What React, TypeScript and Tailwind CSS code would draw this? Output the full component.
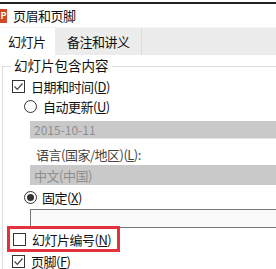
import React from "react";

const font = { fontFamily: '"Noto Sans CJK SC", "Noto Sans", sans-serif' };

function Check({ checked }: { checked: boolean }) {
  return (
    <div className="w-[13px] h-[13px] border border-[#333] bg-white flex items-center justify-center shrink-0">
      {checked && (
        <svg width="11" height="11" viewBox="0 0 11 11">
          <path d="M1.5 5.5 L4.3 8.3 L9.5 2.5" fill="none" stroke="#444" strokeWidth="1.2" />
        </svg>
      )}
    </div>
  );
}

function Radio({ checked }: { checked: boolean }) {
  return (
    <div className="w-[13px] h-[13px] rounded-full border border-[#333] bg-white flex items-center justify-center shrink-0">
      {checked && <div className="w-[7px] h-[7px] rounded-full bg-[#333]" />}
    </div>
  );
}

function Mn({ text, k }: { text: string; k: string }) {
  return (
    <span className="whitespace-nowrap">
      {text}(<span className="underline">{k}</span>)
    </span>
  );
}

export default function App() {
  return (
    <div className="w-[276px] h-[269px] bg-white overflow-hidden text-[13px] tracking-[-0.5px] leading-none text-[#111]" style={font}>
      <div className="h-[2px] bg-white" />
      <div className="h-[2px] bg-[#222]" />
      {/* title bar */}
      <div className="h-[23px] flex items-center">
        <div className="w-[7px] h-[14px] bg-[#d24726] flex items-center justify-end pr-[1px]">
          <span className="text-white text-[9px] font-bold leading-none">P</span>
        </div>
        <span className="ml-[6px]">页眉和页脚</span>
      </div>
      {/* tabs */}
      <div className="h-[28px] flex bg-[#ececec] border-t border-[#f4f4f4]">
        <div className="w-[55px] bg-white flex items-center pl-[8px]">幻灯片</div>
        <div className="w-[85px] ml-[2px] flex items-center pl-[10px] border-r border-[#dcdcdc]">备注和讲义</div>
        <div className="flex-1" />
      </div>
      {/* content */}
      <div className="relative h-[214px] pt-[11px]">
        <div className="ml-[2px] h-full border-l border-t border-[#dcdcdc] relative">
          <div className="absolute left-[8px] -top-[8px] bg-white px-[3px] text-[13.5px] tracking-normal leading-none">幻灯片包含内容</div>
          <div className="pt-[12px] flex flex-col">
            <div className="h-[14px] flex items-center gap-[6px] pl-[9px]">
              <Check checked />
              <Mn text="日期和时间" k="D" />
            </div>
            <div className="h-[20px] mt-[3px] flex items-center gap-[6px] pl-[21px]">
              <Radio checked={false} />
              <Mn text="自动更新" k="U" />
            </div>
            <div className="mt-[5px] ml-[27px] h-[18px] bg-[#c9c9c9] border-b border-[#e4e4e4] flex items-center pl-[4px] text-[12px] tracking-normal text-[#8e8e8e]">
              2015-10-11
            </div>
            <div className="h-[18px] mt-[6px] flex items-center pl-[33px] text-[#444] whitespace-nowrap">
              语言(国家/地区)(<span className="underline">L</span>):
            </div>
            <div className="mt-[2px] ml-[27px] h-[20px] bg-[#c9c9c9] flex items-center pl-[4px] text-[#8e8e8e]">
              中文(中国)
            </div>
            <div className="h-[24px] flex items-center gap-[5px] pl-[21px]">
              <Radio checked />
              <Mn text="固定" k="X" />
            </div>
            <div className="ml-[27px] h-[19px] border border-[#777] border-r-0 bg-[#fafafa]" />
            <div className="relative z-10 -mt-[2px] ml-[4px] w-[113px] h-[26px] border-[3px] border-[#e3323e] flex items-center gap-[6px] pl-[3px]">
              <Check checked={false} />
              <Mn text="幻灯片编号" k="N" />
            </div>
            <div className="h-[16px] mt-[1px] flex items-center gap-[6px] pl-[9px]">
              <Check checked />
              <Mn text="页脚" k="F" />
            </div>
          </div>
        </div>
      </div>
    </div>
  );
}
